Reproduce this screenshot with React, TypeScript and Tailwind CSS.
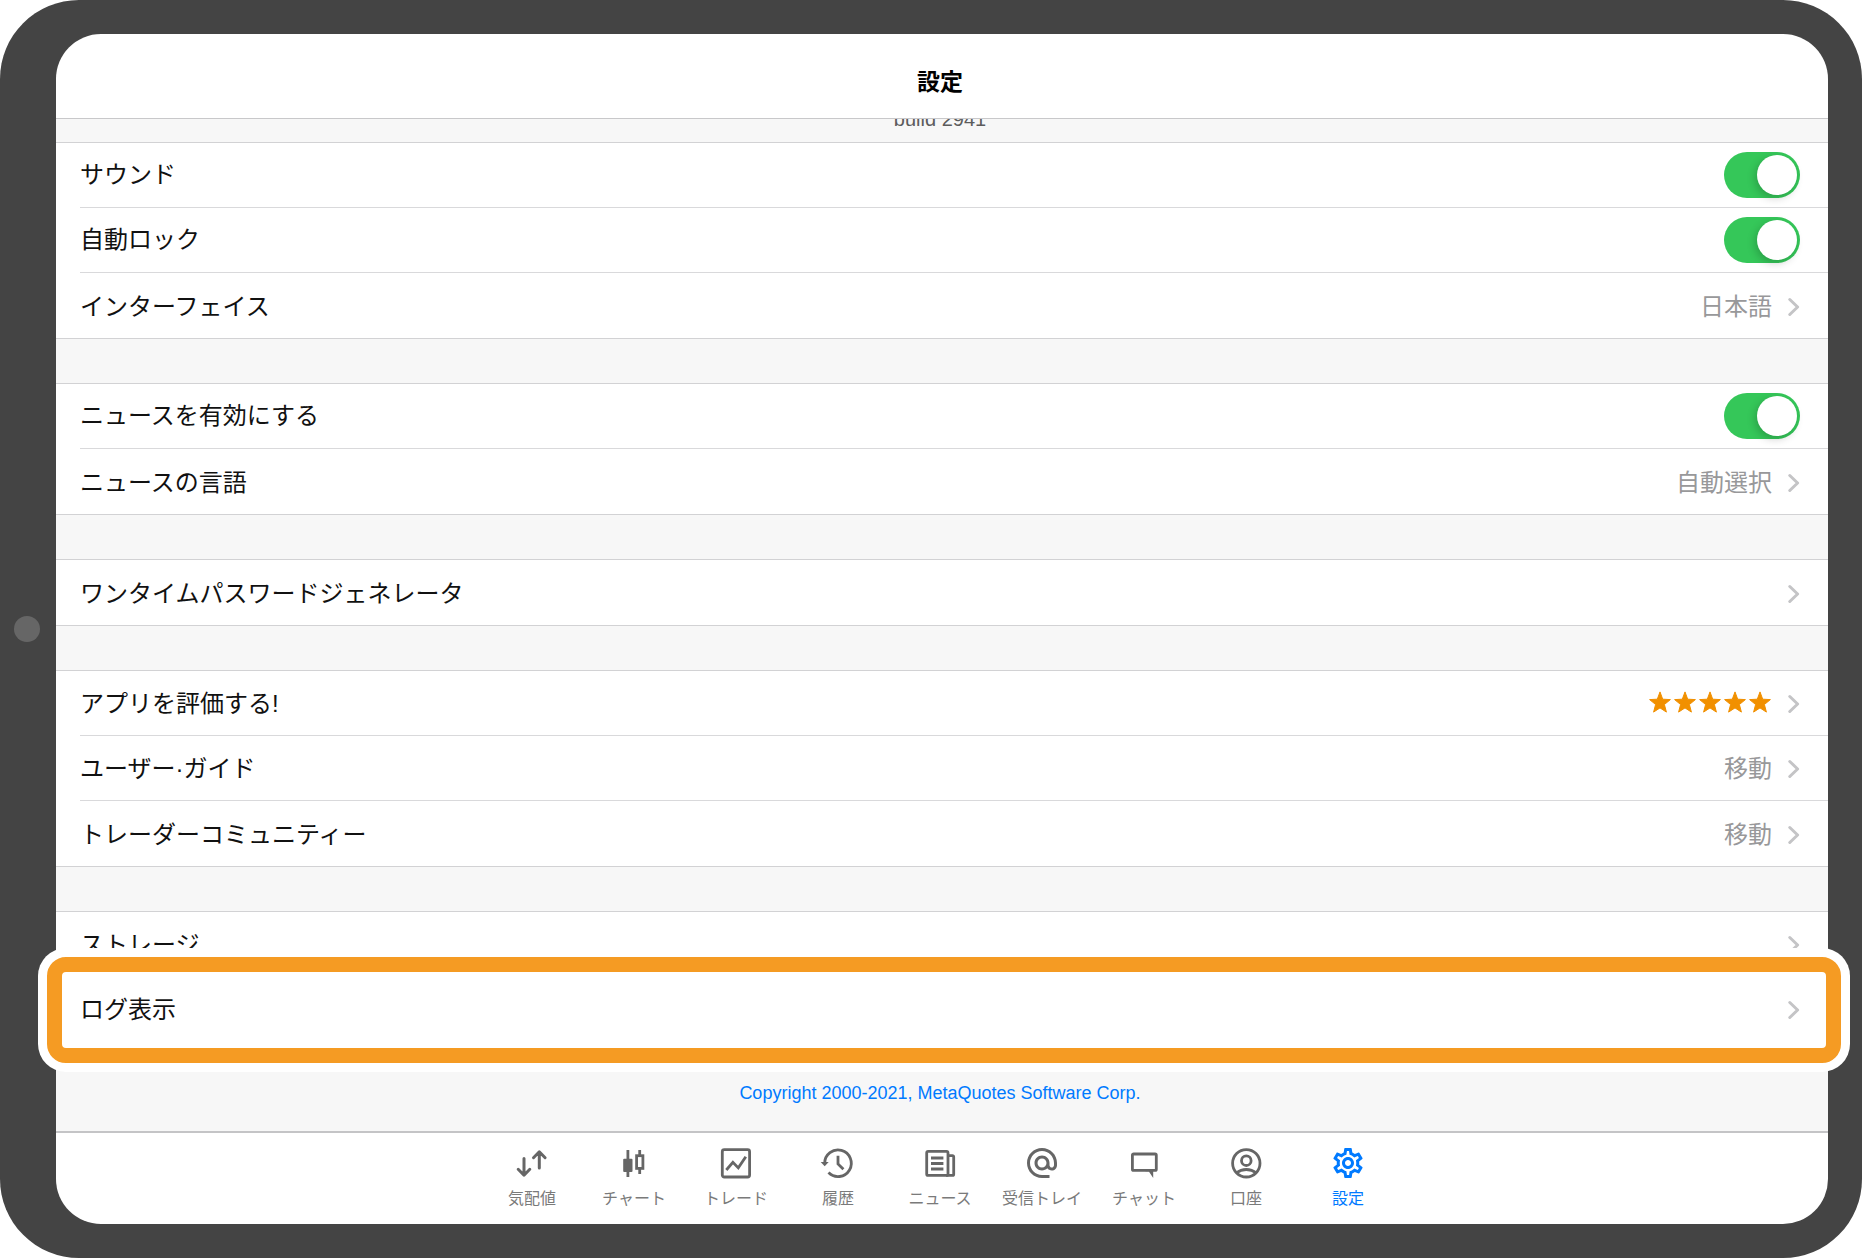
import { useId, useState } from "react";
import type { ReactNode } from "react";
import { MdAlternateEmail, MdOutlineSettings } from "react-icons/md";

function Chevron() {
  return (
    <svg width="12" height="20" viewBox="0 0 12 20" fill="none" stroke="#c4c4c6" strokeWidth="3" strokeLinecap="round" strokeLinejoin="round" aria-hidden="true">
      <path d="M1.8 2.5 9.6 10l-7.8 7.5" />
    </svg>
  );
}

function Stars() {
  return (
    <span className="flex gap-[3px] pr-px pb-1" role="img" aria-label="5">
      {[0, 1, 2, 3, 4].map((i) => (
        <svg
          key={i}
          width="22"
          height="22"
          viewBox="0 0 22 22"
          fill="#f19000"
          stroke="#f19000"
          strokeWidth="1"
          strokeLinejoin="round"
          className="overflow-visible"
          aria-hidden="true"
        >
          <path d="M11 .9l2.700 7.300 7.700.4-6 4.900 2 7.600L11 16.900l-6.400 4.200 2-7.600-6-4.900 7.700-.4z" />
        </svg>
      ))}
    </span>
  );
}

function Section({ children }: { children: ReactNode }) {
  return <section className="border-y border-[#d2d2d4] bg-white [&>*:last-child]:h-[65px]">{children}</section>;
}

function Divider() {
  return <div className="ml-6 h-px bg-[#d9d9db]" />;
}

function SwitchRow({ label }: { label: string }) {
  const id = useId();
  const [on, setOn] = useState(true);
  return (
    <div className="flex h-16 items-center justify-between pr-7 pl-6">
      <label htmlFor={id}>{label}</label>
      <input
        id={id}
        type="checkbox"
        role="switch"
        checked={on}
        onChange={() => setOn(!on)}
        className="flex h-[46px] w-[76px] cursor-pointer appearance-none items-center rounded-full bg-[#d1d1d6] px-[3px] before:block before:size-10 before:rounded-full before:bg-white before:shadow-[-2px_3px_8px_rgba(0,0,0,0.2)] before:content-[''] checked:justify-end checked:bg-[#35c759]"
      />
    </div>
  );
}

function LinkRow({ label, value }: { label: string; value?: ReactNode }) {
  return (
    <button type="button" className="relative z-10 flex h-16 w-full items-center justify-between pt-0.5 pr-7 pl-6 text-left">
      <span>{label}</span>
      <span className="flex items-center gap-4 text-[#98989a]">
        {value}
        <Chevron />
      </span>
    </button>
  );
}

function Icon({ children }: { children: ReactNode }) {
  return (
    <svg width="32" height="32" viewBox="0 0 32 32" fill="none" stroke="currentColor" strokeWidth="2.8" className="overflow-visible" aria-hidden="true">
      {children}
    </svg>
  );
}

const tabs: { label: string; icon: ReactNode; active?: boolean }[] = [
  {
    label: "気配値",
    icon: (
      <Icon>
        <path strokeWidth="3" strokeLinecap="round" strokeLinejoin="round" d="M8 11.500V28M2.200 22.300 8 28.200l5.800-5.900M23.300 21V5M17.500 10.700 23.300 4.800l5.800 5.900" />
      </Icon>
    ),
  },
  {
    label: "チャート",
    icon: (
      <Icon>
        <path d="M9.900 3v27M21.700 3v5M21.700 22v5" />
        <rect x="5.200" y="11.700" width="9.300" height="13.300" rx="1" fill="currentColor" stroke="none" />
        <rect x="18.600" y="8.700" width="6.300" height="12.700" />
      </Icon>
    ),
  },
  {
    label: "トレード",
    icon: (
      <Icon>
        <rect x="2.300" y="2.700" width="27.300" height="27.300" rx="2" />
        <path d="M6.300 23l6.600-7.700 5.400 5.600 7.500-11.200" />
      </Icon>
    ),
  },
  {
    label: "履歴",
    icon: (
      <Icon>
        <path d="M2.700 16.300a13.300 13.300 0 1 1 3.800 9.300" />
        <path d="M-1.300 15h8l-4 4.300z" fill="currentColor" stroke="none" />
        <path d="M16 8.700v8.200l5.400 5.400" />
      </Icon>
    ),
  },
  {
    label: "ニュース",
    icon: (
      <Icon>
        <rect x="2.700" y="4.400" width="21.300" height="24" rx="1.500" />
        <path d="M24 8.700h4.500a1.200 1.200 0 0 1 1.200 1.200v17.300a1.200 1.200 0 0 1-1.200 1.200H22M7 11h12.400M7 16.500h12.400M7 22h12.400" />
      </Icon>
    ),
  },
  { label: "受信トレイ", icon: <MdAlternateEmail size={36} className="-m-0.5" /> },
  {
    label: "チャット",
    icon: (
      <Icon>
        <path strokeLinejoin="round" d="M5.600 7h21.500a1.200 1.200 0 0 1 1.200 1.200v14a1.200 1.200 0 0 1-1.200 1.200H5.600a1.200 1.200 0 0 1-1.200-1.200v-14A1.200 1.200 0 0 1 5.600 7z" />
        <path d="M17.500 24.300h3.200l4.500 6.700v-8h-7.700z" fill="currentColor" stroke="none" />
      </Icon>
    ),
  },
  {
    label: "口座",
    icon: (
      <Icon>
        <circle cx="16.300" cy="16.300" r="13.700" />
        <circle cx="16.300" cy="13.700" r="4.800" />
        <path d="M6.300 26c2.800-2.200 6.200-3.500 10-3.500s7.200 1.300 10 3.500" />
      </Icon>
    ),
  },
  { label: "設定", icon: <MdOutlineSettings size={36} className="-m-0.5" />, active: true },
];

export default function App() {
  return (
    <div className="min-h-screen bg-white font-['Liberation_Sans','Noto_Sans_CJK_JP',sans-serif]">
      <div className="flex min-h-screen rounded-[79px] bg-[#444444] py-[34px] pr-[34px]">
        <div className="flex w-14 shrink-0 items-center justify-center pr-0.5">
          <button type="button" aria-label="ホーム" className="size-[26px] rounded-full bg-[#666666]" />
        </div>

        <div className="flex min-w-0 flex-1 flex-col">
          <header className="flex h-[85px] items-center justify-center rounded-t-[45px] border-b border-[#c8c8ca] bg-white pt-3 pr-1">
            <h1 className="text-[23px] leading-8 font-bold text-black">設定</h1>
          </header>

          <main className="flex flex-1 flex-col bg-[#f7f7f7] text-[24px] leading-8 text-[#111111]">
            <p className="flex h-[23px] items-end justify-center overflow-hidden pr-1 pb-[13px] text-[20px] leading-5 text-[#5c5c5c]">
              build 2941
            </p>
            <div className="flex flex-col gap-11">
              <Section>
                <SwitchRow label="サウンド" />
                <Divider />
                <SwitchRow label="自動ロック" />
                <Divider />
                <LinkRow label="インターフェイス" value="日本語" />
              </Section>
              <Section>
                <SwitchRow label="ニュースを有効にする" />
                <Divider />
                <LinkRow label="ニュースの言語" value="自動選択" />
              </Section>
              <Section>
                <LinkRow label="ワンタイムパスワードジェネレータ" />
              </Section>
              <Section>
                <LinkRow label="アプリを評価する!" value={<Stars />} />
                <Divider />
                <LinkRow label="ユーザー·ガイド" value="移動" />
                <Divider />
                <LinkRow label="トレーダーコミュニティー" value="移動" />
              </Section>
              <Section>
                <LinkRow label="ストレージ" />
                <Divider />
                <div className="relative z-20">
                  <div className="absolute -top-[29px] -right-[22px] -bottom-[30px] -left-[18px] rounded-[28px] bg-white p-[9px]">
                    <div className="h-full rounded-[19px] border-[15px] border-[#f59b23]" />
                  </div>
                  <LinkRow label="ログ表示" />
                </div>
              </Section>
            </div>
            <div className="flex flex-1 items-center justify-center pt-3 pr-1 text-[18px] leading-6">
              <a href="#copyright" className="text-[#007aff]">
                Copyright 2000-2021, MetaQuotes Software Corp.
              </a>
            </div>
          </main>

          <nav className="flex h-[93px] justify-center rounded-b-[45px] border-t-2 border-[#c4c4c6] bg-white pt-[14px] pr-1">
            {tabs.map((tab) => (
              <button
                key={tab.label}
                type="button"
                aria-current={tab.active ? "page" : undefined}
                className={
                  tab.active
                    ? "flex w-[102px] flex-col items-center gap-2 text-[#007aff]"
                    : "flex w-[102px] flex-col items-center gap-2 text-[#666666]"
                }
              >
                {tab.icon}
                <span className={tab.active ? "text-[16px] leading-6" : "text-[16px] leading-6 text-[#7a7a7a]"}>{tab.label}</span>
              </button>
            ))}
          </nav>
        </div>
      </div>
    </div>
  );
}
